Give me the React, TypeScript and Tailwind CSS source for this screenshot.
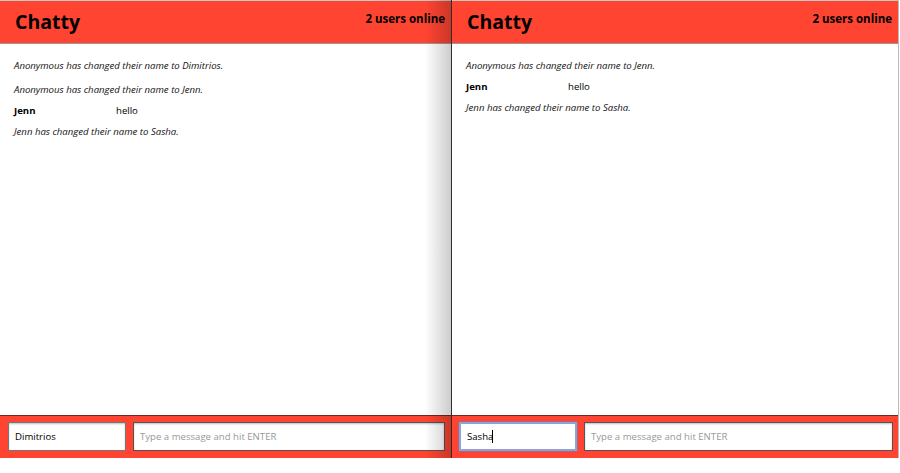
import React from "react";

type Row =
  | { kind: "note"; text: string }
  | { kind: "msg"; user: string; text: string };

const leftRows: Row[] = [
  { kind: "note", text: "Anonymous has changed their name to Dimitrios." },
  { kind: "note", text: "Anonymous has changed their name to Jenn." },
  { kind: "msg", user: "Jenn", text: "hello" },
  { kind: "note", text: "Jenn has changed their name to Sasha." },
];

const rightRows: Row[] = [
  { kind: "note", text: "Anonymous has changed their name to Jenn." },
  { kind: "msg", user: "Jenn", text: "hello" },
  { kind: "note", text: "Jenn has changed their name to Sasha." },
];

function ChatWindow({
  rows,
  name,
  focused,
  shaded,
  className,
  footerPad,
}: {
  rows: Row[];
  name: string;
  focused?: boolean;
  shaded?: boolean;
  className?: string;
  footerPad: string;
}) {
  return (
    <div className={`relative flex flex-col h-full bg-white ${className ?? ""}`}>
      <header className="h-[44px] flex items-start justify-between bg-[#ff4431] border-t border-t-[#c9c9c9] border-b border-b-[#9a9a9a] pl-[15px] pr-[6px]">
        <h1 className="text-[19.5px] font-bold leading-none mt-[11px] text-black">Chatty</h1>
        <span className="text-[11.5px] font-bold leading-none mt-[12px] text-black">2 users online</span>
      </header>

      <main className="flex-1 pt-[10px] px-[14px]">
        {rows.map((r, i) =>
          r.kind === "note" ? (
            <div key={i} className="h-[24px] flex items-center italic text-[9.6px] text-[#111]">
              {r.text}
            </div>
          ) : (
            <div key={i} className="h-[18px] flex items-center text-[9.6px] text-black">
              <span className="w-[102px] font-bold">{r.user}</span>
              <span>{r.text}</span>
            </div>
          )
        )}
      </main>

      <footer className={`h-[43px] flex gap-[7px] bg-[#ff4431] border-t border-t-[#6b2a22] pt-[6px] ${footerPad}`}>
        <div className="relative w-[118px] h-[29px]">
          <input
            defaultValue={name}
            className={`w-full h-full px-[6px] text-[9.6px] text-black bg-white outline-none ${
              focused
                ? "border-2 border-[#86a6e0] shadow-[0_0_2px_#5b8ee0]"
                : "border border-[#777] shadow-[inset_0_1px_2px_rgba(0,0,0,0.25)]"
            }`}
          />
          {focused && <span className="absolute left-[33px] top-[8px] h-[13px] w-px bg-black" />}
        </div>
        <input
          placeholder="Type a message and hit ENTER"
          className="flex-1 h-[29px] px-[6px] text-[9.6px] text-black placeholder:text-[#999] bg-white border border-[#555] outline-none shadow-[inset_0_1px_2px_rgba(0,0,0,0.25)]"
        />
      </footer>

      {shaded && (
        <div className="pointer-events-none absolute top-0 right-0 h-full w-[26px] bg-gradient-to-r from-transparent to-black/20" />
      )}
    </div>
  );
}

export default function App() {
  return (
    <div className="w-[900px] h-[473px] bg-white overflow-hidden" style={{ fontFamily: '"Open Sans", sans-serif' }}>
      <div className="flex h-[458px]">
        <ChatWindow rows={leftRows} name="Dimitrios" shaded footerPad="pl-[8px] pr-[6px]" className="w-[451px]" />
        <div className="w-px bg-[#2e2e2e]" />
        <ChatWindow rows={rightRows} name="Sasha" focused footerPad="pl-[7px] pr-[5px]" className="w-[447px] border-r border-r-[#bbb]" />
      </div>
    </div>
  );
}
